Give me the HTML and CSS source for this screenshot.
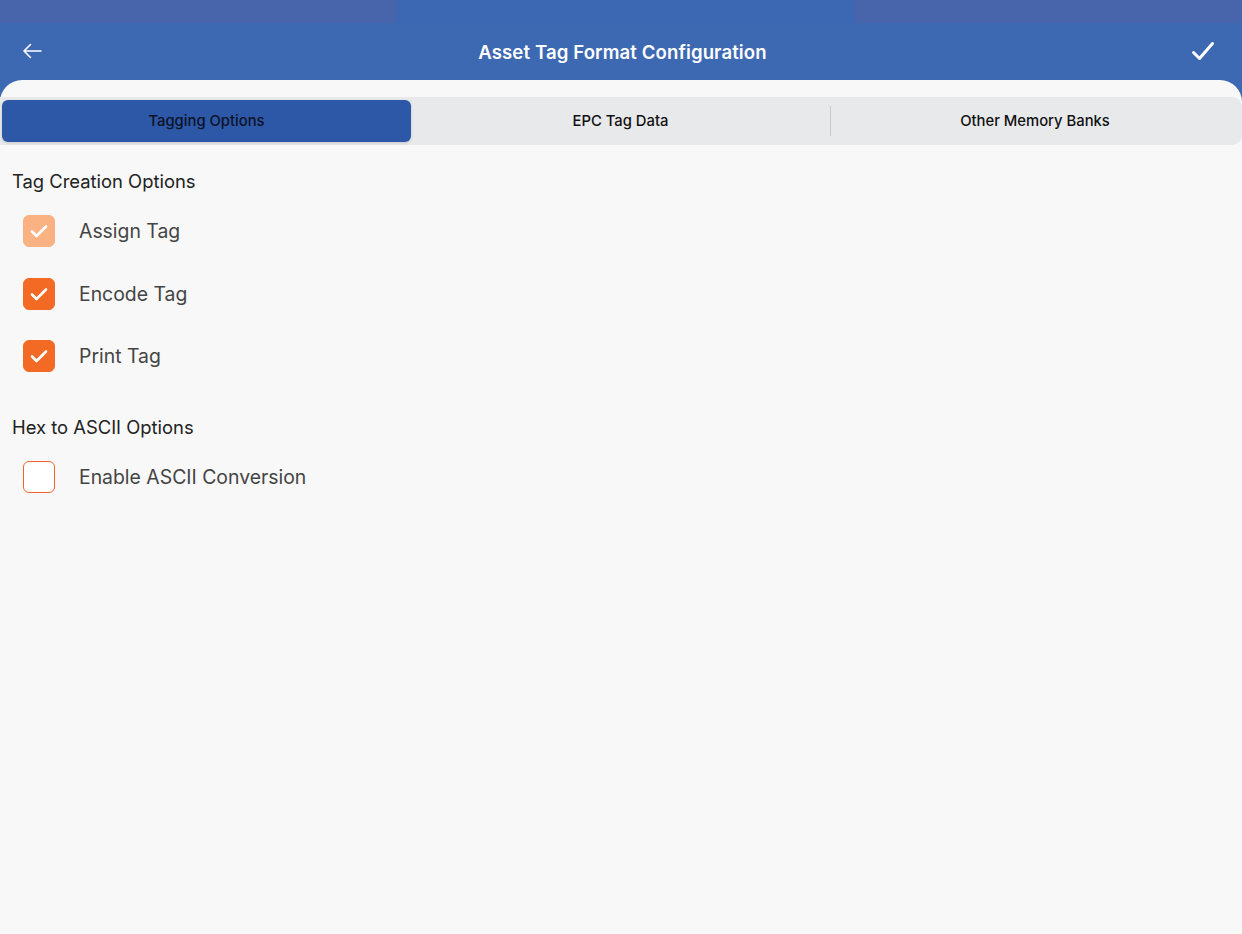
FILE: index.html
```html
<!DOCTYPE html>
<html lang="en">
<head>
  <meta charset="UTF-8">
  <title>Asset Tag Format Configuration</title>
  <link rel="stylesheet" href="styles.css">
</head>
<body>
  <div class="statusbar">
    <div class="sb-left"></div>
    <div class="sb-mid"></div>
    <div class="sb-right"></div>
  </div>
  <header class="navbar">
    <button class="nav-btn back" aria-label="Back">
      <svg width="20" height="16" viewBox="0 0 20 16"><path d="M19 8H2M8.5 1.5L2 8l6.5 6.5" fill="none" stroke="#fff" stroke-width="1.6" stroke-linecap="round" stroke-linejoin="round"/></svg>
    </button>
    <h1 class="title">Asset Tag Format Configuration</h1>
    <button class="nav-btn done" aria-label="Done">
      <svg width="24" height="20" viewBox="0 0 24 20"><path d="M2.5 11.5l6 6L21.5 2.5" fill="none" stroke="#fff" stroke-width="3" stroke-linecap="round" stroke-linejoin="round"/></svg>
    </button>
  </header>

  <main class="sheet">
    <div class="segments">
      <div class="seg active">Tagging Options</div>
      <div class="seg middle">EPC Tag Data</div>
      <div class="seg divided">Other Memory Banks</div>
    </div>

    <section class="group">
      <h2>Tag Creation Options</h2>
      <label class="option">
        <span class="box checked disabled">
          <svg width="18" height="14" viewBox="0 0 18 14"><path d="M2 7.5l4.5 4.5L16 2.5" fill="none" stroke="#fff" stroke-width="2.6" stroke-linecap="round" stroke-linejoin="round"/></svg>
        </span>
        <span class="text">Assign Tag</span>
      </label>
      <label class="option">
        <span class="box checked">
          <svg width="18" height="14" viewBox="0 0 18 14"><path d="M2 7.5l4.5 4.5L16 2.5" fill="none" stroke="#fff" stroke-width="2.6" stroke-linecap="round" stroke-linejoin="round"/></svg>
        </span>
        <span class="text">Encode Tag</span>
      </label>
      <label class="option">
        <span class="box checked">
          <svg width="18" height="14" viewBox="0 0 18 14"><path d="M2 7.5l4.5 4.5L16 2.5" fill="none" stroke="#fff" stroke-width="2.6" stroke-linecap="round" stroke-linejoin="round"/></svg>
        </span>
        <span class="text">Print Tag</span>
      </label>
    </section>

    <section class="group">
      <h2>Hex to ASCII Options</h2>
      <label class="option">
        <span class="box"></span>
        <span class="text">Enable ASCII Conversion</span>
      </label>
    </section>
  </main>
</body>
</html>
```

FILE: styles.css
```css
html, body {
  margin: 0;
  padding: 0;
  height: 100%;
}
body {
  background: #3d68b2;
  font-family: Inter, "Noto Sans", Roboto, sans-serif;
  display: flex;
  flex-direction: column;
  overflow: hidden;
}
.statusbar {
  display: flex;
  height: 23px;
}
.sb-left, .sb-right {
  background: #4864ab;
}
.sb-left { width: 396px; }
.sb-mid { width: 459px; background: #3c67b2; }
.sb-right { flex: 1; }
.navbar {
  height: 57px;
  display: flex;
  align-items: center;
  justify-content: space-between;
  padding: 0 19px 0 14px;
  background: #3d68b2;
}
.nav-btn {
  background: none;
  border: none;
  padding: 6px 8px;
  display: flex;
  align-items: center;
  cursor: pointer;
  margin-top: -1px;
}
.title {
  margin: 0 0 0 12px;
  color: #fff;
  font-size: 18.6px;
  font-weight: 600;
  letter-spacing: 0.1px;
}
.sheet {
  flex: 1;
  background: #f8f8f8;
  border-radius: 22px 22px 0 0;
  padding-top: 17px;
}
.segments {
  display: flex;
  background: #e8e9eb;
  border-radius: 0 10px 10px 0;
  height: 48px;
  padding: 3px 2px;
  box-sizing: border-box;
}
.seg {
  flex: 1;
  display: flex;
  align-items: center;
  justify-content: center;
  font-size: 14.8px;
  font-weight: 500;
  color: #111;
  border-radius: 6px;
  position: relative;
}
.seg.active {
  flex: none;
  width: 409px;
  background: #2d58a8;
  color: #0c1226;
  box-shadow: 0 1px 3px rgba(0,0,0,0.15);
}
.seg.middle {
  flex: none;
  width: 419px;
}
.seg.divided::before {
  content: "";
  position: absolute;
  left: 0;
  top: 6px;
  bottom: 6px;
  width: 1px;
  background: #c9cacd;
}
.group {
  padding: 0 12px;
}
.group h2 {
  margin: 0;
  padding-top: 25px;
  font-size: 18.4px;
  font-weight: 400;
  color: #222;
  line-height: 22px;
}
.group + .group h2 {
  padding-top: 28px;
}
.option {
  display: flex;
  align-items: center;
  height: 62.5px;
  padding-left: 11px;
}
.group h2 + .option {
  margin-top: 8px;
}
.box {
  width: 32px;
  height: 32px;
  box-sizing: border-box;
  border-radius: 6px;
  border: 1.5px solid #f0642c;
  background: #fff;
  display: flex;
  align-items: center;
  justify-content: center;
}
.box.checked {
  background: #f26a24;
  border-color: #f26a24;
}
.box.checked.disabled {
  background: #fbb283;
  border-color: #fbb283;
}
.text {
  margin-left: 24px;
  font-size: 19.4px;
  color: #444;
}
```
